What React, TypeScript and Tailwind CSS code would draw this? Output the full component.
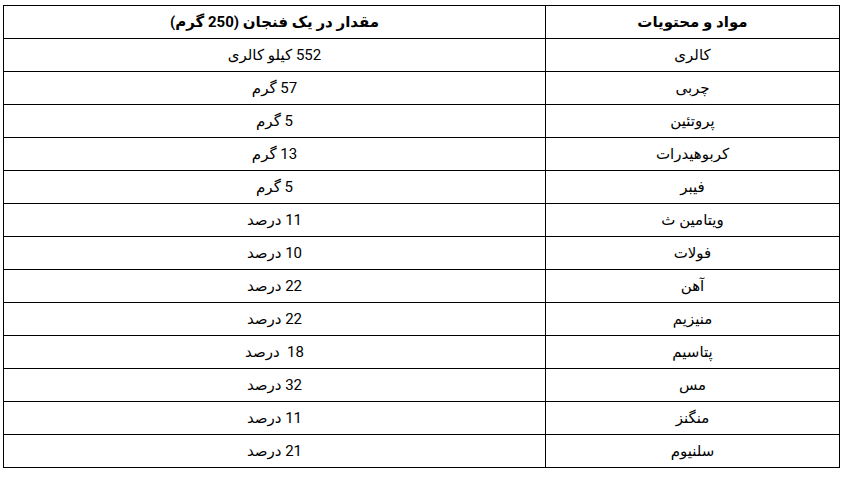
import React from 'react';

const rows: [string, string][] = [
    ['کالری', '552 کیلو کالری'],
    ['چربی', '57 گرم'],
    ['پروتئین', '5 گرم'],
    ['کربوهیدرات', '13 گرم'],
    ['فیبر', '5 گرم'],
    ['ویتامین ث', '11 درصد'],
    ['فولات', '10 درصد'],
    ['آهن', '22 درصد'],
    ['منیزیم', '22 درصد'],
    ['پتاسیم', '18\u00a0 درصد'],
    ['مس', '32 درصد'],
    ['منگنز', '11 درصد'],
    ['سلنیوم', '21 درصد'],
];

const App = () => {
    return (
        <div className="w-[847px] h-[478px] bg-white pt-[5px] pl-[3px]">
            <table
                dir="rtl"
                className="w-[837px] border-collapse text-[15px] text-black font-['Roboto','DejaVu_Sans',sans-serif]"
            >
                <thead>
                    <tr className="h-[33px]">
                        <th className="w-[294px] border border-black text-center font-bold p-0">مواد و محتویات</th>
                        <th className="border border-black text-center font-bold p-0">مقدار در یک فنجان (250 گرم)</th>
                    </tr>
                </thead>
                <tbody>
                    {rows.map(([name, amount]) => (
                        <tr key={name} className="h-[33px]">
                            <td className="border border-black text-center p-0">{name}</td>
                            <td className="border border-black text-center p-0">{amount}</td>
                        </tr>
                    ))}
                </tbody>
            </table>
        </div>
    );
};

export default App;
